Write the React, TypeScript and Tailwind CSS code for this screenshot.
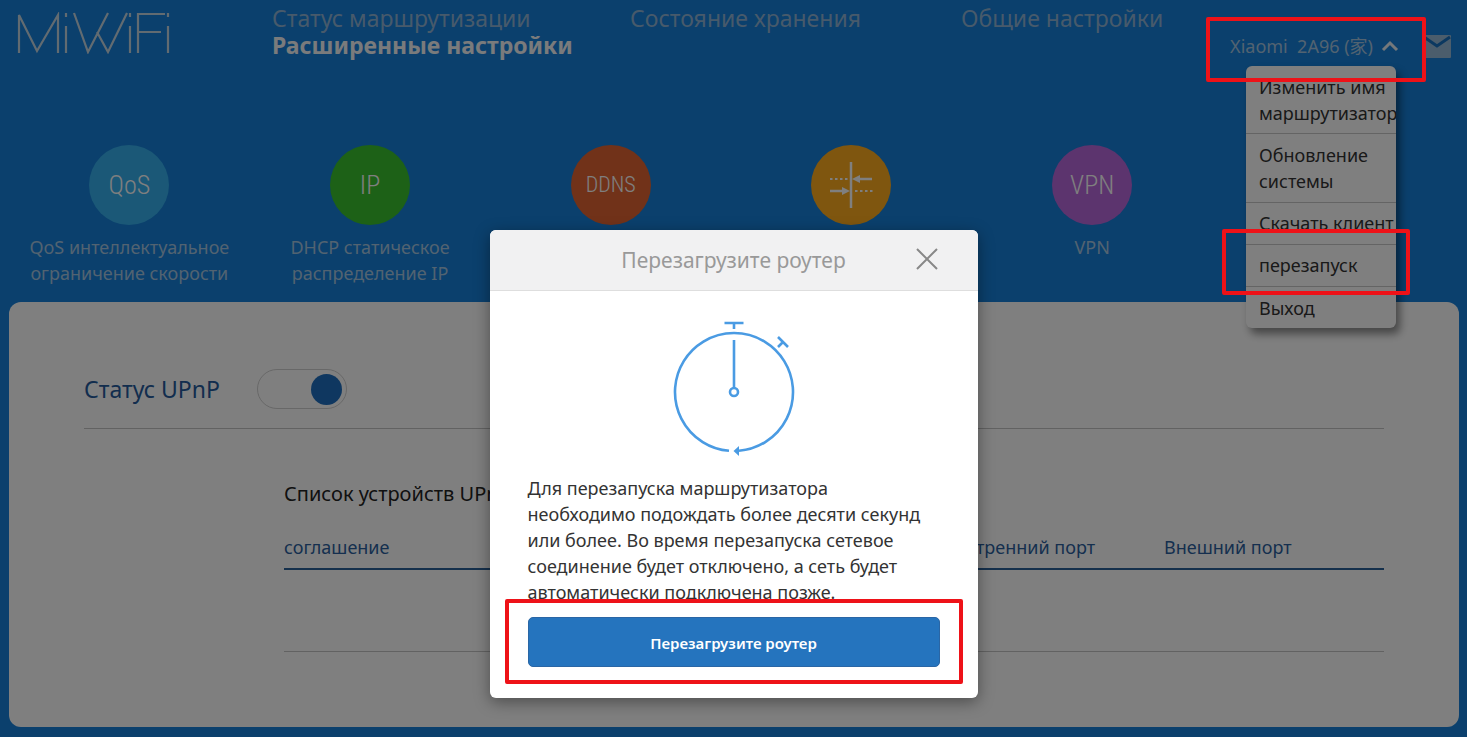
import type { ReactNode } from "react";

const features: { name: string; label: string[]; color: string; icon: ReactNode; text: string }[] = [
  { name: "QoS", label: ["QoS интеллектуальное", "ограничение скорости"], color: "bg-[#36b0ee]", icon: "QoS", text: "text-[26px]" },
  { name: "DHCP", label: ["DHCP статическое", "распределение IP"], color: "bg-[#3ac22e]", icon: "IP", text: "text-[26px]" },
  { name: "DDNS", label: [], color: "bg-[#e26432]", icon: "DDNS", text: "text-[22px]" },
  { name: "Перенаправление портов", label: [], color: "bg-[#ffac1e]", icon: <ForwardIcon />, text: "text-[22px]" },
  { name: "VPN", label: ["VPN"], color: "bg-[#b868dc]", icon: "VPN", text: "text-[26px]" },
];

function ForwardIcon() {
  return (
    <svg width="44" height="48" viewBox="0 0 44 48" fill="none" stroke="#fff" strokeWidth="2" aria-hidden="true">
      <path d="M22 1v46" strokeWidth="2.5" />
      <path d="M1 18h19M26 30h18" strokeDasharray="2.500 2.500" />
      <path d="M28 18h15M1 30h15" strokeWidth="2.500" />
      <path d="m23 18 8-4v8zM21 30l-8-4v8z" fill="#fff" stroke="none" />
    </svg>
  );
}

function Logo() {
  return (
    <svg width="154" height="42" viewBox="0 0 154 42" fill="none" stroke="#c4d6e2" strokeWidth="2.2" aria-label="MiWiFi" role="img">
      <path d="M2 41V3l18 36L41 3v38M49 14v27M49 1v4M57 1l14 39L91 1M80 20l11 20L110 1M113 14v27M113 1v4M121 41V2h27M121 20h23M151 14v27M151 1v4" />
    </svg>
  );
}

function Stopwatch() {
  return (
    <svg width="124" height="140" viewBox="0 0 124 140" fill="none" stroke="#4a9be3" strokeWidth="2.6" aria-hidden="true">
      <path d="M57 133.800A59 59 0 1 1 67 133.800" />
      <path d="M62 72V23M52.500 6h19M62 6v6" />
      <path d="M106 20l10 10M111 25l-5 5" />
      <circle cx="62" cy="75" r="4" />
      <path d="m61.500 134 5.500-5v10z" fill="#4a9be3" stroke="none" />
    </svg>
  );
}

function Mark({ place }: { place: string }) {
  return <span aria-hidden="true" className={`pointer-events-none absolute z-30 rounded-[2px] border-4 border-[#ee1218] ${place}`} />;
}

export default function App() {
  return (
    <div className="relative min-h-screen bg-[#1680da] pr-2 pb-[10px] pl-[9px] font-['Noto_Sans','Noto_Sans_CJK_SC',sans-serif]">
      <header className="relative flex h-[145px] items-start pl-2">
        <a href="#home" className="mt-3 w-[255px] shrink-0">
          <Logo />
        </a>
        <nav className="mt-[5px] grid grid-cols-[358px_331px_auto] text-[23px] leading-[27px] text-[#8fb4d6]">
          <a href="#status">Статус маршрутизации</a>
          <a href="#storage">Состояние хранения</a>
          <a href="#general">Общие настройки</a>
          <a href="#advanced" className="font-bold whitespace-nowrap text-[#f4f6f8]">
            Расширенные настройки
          </a>
        </nav>
        <div className="absolute top-[31px] right-2 flex items-center gap-6">
          <button className="flex items-center gap-2 text-[18px] leading-[30px] whitespace-nowrap text-[#a5c6e2]">
            <span>Xiaomi&nbsp; 2A96 (家)</span>
            <svg width="18" height="12" viewBox="0 0 18 12" fill="none" stroke="#e8f0f6" strokeWidth="3" aria-hidden="true">
              <path d="m2 10 7-7 7 7" />
            </svg>
          </button>
          <a href="#mail" aria-label="Сообщения">
            <svg width="28" height="24" viewBox="0 0 28 24" aria-hidden="true">
              <rect width="28" height="23" y="1" rx="1" fill="#96bad8" />
              <path d="m1 3 13 9 13-9" fill="none" stroke="#1670c0" strokeWidth="3" />
            </svg>
          </a>
        </div>
        <div className="absolute top-[66px] right-[63px] z-10 w-[150px] overflow-hidden rounded-md bg-white text-[18px] leading-[26px] text-[#333] shadow-[4px_6px_8px_rgba(0,0,0,0.45)]">
          <a href="#rename" className="block border-b border-[#c8c8c8] pt-2 pb-[7px] pl-[13px]">Изменить имя маршрутизатор</a>
          <a href="#update" className="block border-b border-[#c8c8c8] pt-2 pb-2 pl-[13px]">Обновление системы</a>
          <a href="#client" className="block border-b border-[#c8c8c8] pt-[7px] pb-2 pl-[13px] whitespace-nowrap">Скачать клиент</a>
          <a href="#restart" className="block border-b border-[#c8c8c8] pt-[7px] pb-2 pl-[13px]">перезапуск</a>
          <a href="#exit" className="block pt-2 pb-[7px] pl-[13px]">Выход</a>
        </div>
      </header>

      <section className="grid h-[157px] w-[83%] grid-cols-5">
        {features.map((f) => (
          <a key={f.name} href="#feature" aria-label={f.name} className="flex flex-col items-center text-center text-[18px] leading-[26px] text-[#a5c6e2]">
            <span className={`mb-[9px] flex size-20 items-center justify-center rounded-full font-['Roboto_Condensed','Open_Sans_Condensed','Noto_Sans_ExtraCondensed','Noto_Sans_Condensed','Roboto',sans-serif] font-light text-white ${f.color} ${f.text}`}>
              {f.icon}
            </span>
            {f.label.map((line) => (
              <span key={line} className="whitespace-nowrap">{line}</span>
            ))}
          </a>
        ))}
      </section>

      <main className="min-h-[425px] rounded-xl bg-white px-[75px] pt-[67px]">
        <div className="flex h-[60px] items-start gap-[37px] border-b border-[#c4c4c4]">
          <label htmlFor="upnp" className="text-[23px] leading-10 text-[#245a9c]">Статус UPnP</label>
          <span className="flex h-10 w-[90px] items-center justify-end rounded-full border border-[#d0d0d0] pr-1">
            <input id="upnp" type="checkbox" role="switch" defaultChecked className="size-[31px] appearance-none rounded-full bg-[#1f6fc0]" />
          </span>
        </div>
        <div className="pl-[200px]">
          <h2 className="pt-[51px] text-[20px] leading-7 text-[#222]">Список устройств UPnP</h2>
          <table className="mt-[26px] w-full table-fixed text-left text-[18px] leading-[26px] text-[#2b5f9e]">
            <thead>
              <tr className="border-b-2 border-[#2a6098]">
                <th className="pb-[8px] font-normal">соглашение</th>
                <td />
                <td />
                <th className="pb-[8px] font-normal whitespace-nowrap">Внутренний порт</th>
                <th className="pb-[8px] font-normal whitespace-nowrap">Внешний порт</th>
              </tr>
            </thead>
            <tbody>
              <tr className="h-[82px] border-b border-[#c4c4c4]">
                <td colSpan={5} />
              </tr>
            </tbody>
          </table>
        </div>
      </main>

      <div className="absolute inset-0 z-20 bg-black/50" />

      <div className="absolute inset-0 z-20 flex items-start justify-center pt-[230px]">
        <div role="dialog" aria-labelledby="dialog-title" className="relative w-[488px] overflow-hidden rounded-md bg-white shadow-[0_4px_16px_rgba(0,0,0,0.4)]">
          <div className="relative flex h-[61px] items-center justify-center border-b border-[#dedede] bg-[#f1f1f2]">
            <h1 id="dialog-title" className="text-[21px] leading-7 text-[#999]">Перезагрузите роутер</h1>
            <button aria-label="Закрыть" className="absolute top-[17px] right-[39px]">
              <svg width="24" height="24" viewBox="0 0 24 24" fill="none" stroke="#888" strokeWidth="2" aria-hidden="true">
                <path d="m2 2 20 20M22 2 2 22" />
              </svg>
            </button>
          </div>
          <div className="px-[38px] pt-[26px] pb-[31px]">
            <div className="flex justify-center">
              <Stopwatch />
            </div>
            <p className="mt-[18px] text-[18px] leading-[26px] text-[#333]">
              Для перезапуска маршрутизатора<br />необходимо подождать более десяти секунд<br />или более. Во время перезапуска сетевое<br />соединение будет отключено, а сеть будет<br />автоматически подключена позже.
            </p>
            <button className="mt-[12px] h-[50px] w-full rounded-[5px] border border-[#2a66a5] bg-[#2574be] pt-[2px] text-[15px] font-semibold text-white">
              Перезагрузите роутер
            </button>
          </div>
          <Mark place="right-[15px] bottom-[14px] left-[15px] h-[85px]" />
        </div>
      </div>

      <Mark place="top-[17px] right-[41px] h-[65px] w-[220px]" />
      <Mark place="top-[229px] right-[57px] h-[66px] w-[188px]" />
    </div>
  );
}
